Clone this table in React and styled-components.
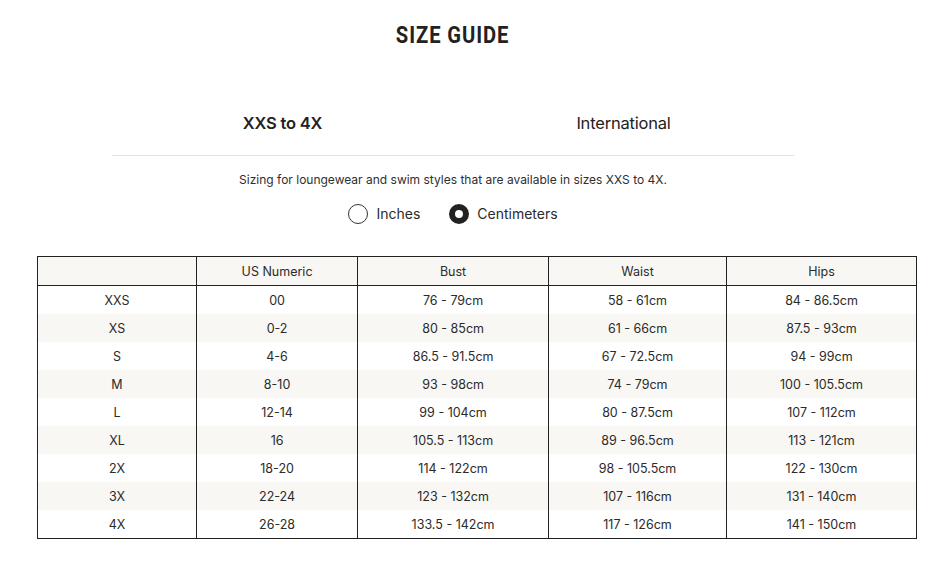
import React, { useState } from 'react';
import styled, { createGlobalStyle } from 'styled-components';

const GlobalStyle = createGlobalStyle`
  body {
    margin: 0;
    background: #fff;
    font-family: Inter, "Liberation Sans", sans-serif;
    color: #2b2b2b;
  }
`;

const Page = styled.div`
  width: 951px;
  padding-top: 21px;
`;

const Header = styled.div`
  width: 906px;
  display: flex;
  flex-direction: column;
  align-items: center;
`;

const Title = styled.h1`
  margin: 0;
  text-align: center;
  font-family: Roboto, "Liberation Sans", sans-serif;
  font-weight: 700;
  font-size: 24px;
  letter-spacing: 1.1px;
  line-height: 28px;
  color: #222;
  transform: scaleX(0.84);
`;

const Tabs = styled.div`
  display: grid;
  grid-template-columns: 1fr 1fr;
  width: 682px;
  margin-top: 42px;
  border-bottom: 1px solid #e2e2e2;
`;

const Tab = styled.button`
  border: 0;
  background: none;
  padding: 0;
  height: 64px;
  font-family: Inter, "Liberation Sans", sans-serif;
  font-size: 16.5px;
  letter-spacing: -0.2px;
  font-weight: ${p => (p.active ? 600 : 400)};
  color: #222;
  cursor: pointer;
`;

const Intro = styled.p`
  margin: 16px 0 0;
  text-align: center;
  font-size: 12px;
  line-height: 16px;
  color: #2f2f2f;
`;

const Units = styled.div`
  display: flex;
  justify-content: center;
  gap: 29px;
  margin-top: 16px;
`;

const Option = styled.label`
  display: flex;
  align-items: center;
  gap: 8px;
  font-size: 14px;
  line-height: 20px;
  color: #2b2b2b;
  cursor: pointer;
`;

const Dot = styled.span`
  box-sizing: border-box;
  width: 20px;
  height: 20px;
  border-radius: 50%;
  border: ${p => (p.checked ? '6px solid #222' : '1px solid #333')};
  background: #fff;
`;

const Table = styled.table`
  border-collapse: collapse;
  margin: 32px 0 0 37px;
  width: 880px;
  border: 1px solid #222;
  font-size: 12.5px;
  color: #2b2b2b;
`;

const Head = styled.th`
  font-weight: 400;
  height: 28px;
  padding: 0;
  background: #f8f7f3;
  border-left: 1px solid #222;
  border-bottom: 1px solid #222;
  width: ${p => p.w}px;
`;

const Row = styled.tr`
  background: ${p => (p.shade ? '#f8f7f3' : '#fff')};
`;

const Cell = styled.td`
  text-align: center;
  height: 28px;
  padding: 0;
  border-left: 1px solid #222;
`;

const columns = [
  { label: '', w: 159 },
  { label: 'US Numeric', w: 161 },
  { label: 'Bust', w: 191 },
  { label: 'Waist', w: 178 },
  { label: 'Hips', w: 190 },
];

const rows = [
  ['XXS', '00', '76 - 79cm', '58 - 61cm', '84 - 86.5cm'],
  ['XS', '0-2', '80 - 85cm', '61 - 66cm', '87.5 - 93cm'],
  ['S', '4-6', '86.5 - 91.5cm', '67 - 72.5cm', '94 - 99cm'],
  ['M', '8-10', '93 - 98cm', '74 - 79cm', '100 - 105.5cm'],
  ['L', '12-14', '99 - 104cm', '80 - 87.5cm', '107 - 112cm'],
  ['XL', '16', '105.5 - 113cm', '89 - 96.5cm', '113 - 121cm'],
  ['2X', '18-20', '114 - 122cm', '98 - 105.5cm', '122 - 130cm'],
  ['3X', '22-24', '123 - 132cm', '107 - 116cm', '131 - 140cm'],
  ['4X', '26-28', '133.5 - 142cm', '117 - 126cm', '141 - 150cm'],
];

export default function App() {
  const [tab, setTab] = useState('xxs');
  const [unit, setUnit] = useState('cm');

  return (
    <Page>
      <GlobalStyle />
      <Header>
        <Title>SIZE GUIDE</Title>
        <Tabs>
          <Tab active={tab === 'xxs'} onClick={() => setTab('xxs')}>XXS to 4X</Tab>
          <Tab active={tab === 'intl'} onClick={() => setTab('intl')}>International</Tab>
        </Tabs>
        <Intro>Sizing for loungewear and swim styles that are available in sizes XXS to 4X.</Intro>
        <Units>
          <Option onClick={() => setUnit('in')}>
            <Dot checked={unit === 'in'} />
            Inches
          </Option>
          <Option onClick={() => setUnit('cm')}>
            <Dot checked={unit === 'cm'} />
            Centimeters
          </Option>
        </Units>
      </Header>
      <Table>
        <thead>
          <tr>
            {columns.map(c => (
              <Head key={c.label || 'size'} w={c.w}>{c.label}</Head>
            ))}
          </tr>
        </thead>
        <tbody>
          {rows.map((r, i) => (
            <Row key={r[0]} shade={i % 2 === 1}>
              {r.map((v, j) => (
                <Cell key={j}>{v}</Cell>
              ))}
            </Row>
          ))}
        </tbody>
      </Table>
    </Page>
  );
}
